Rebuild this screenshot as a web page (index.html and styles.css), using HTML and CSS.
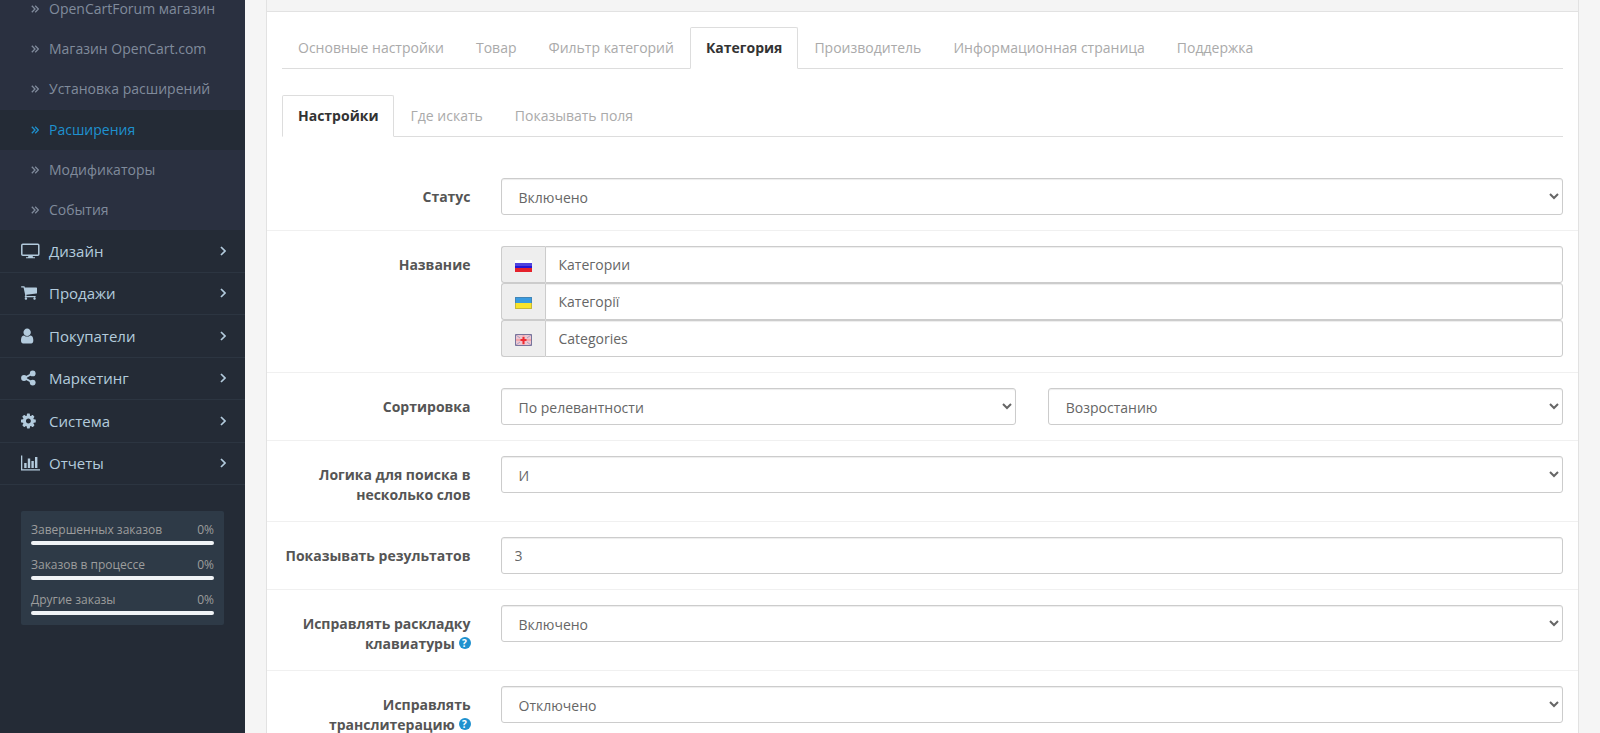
FILE: index.html
```html
<!DOCTYPE html>
<html lang="ru">
<head>
    <meta charset="UTF-8">
    <meta name="viewport" content="width=device-width, initial-scale=1.0">
    <title>Расширения</title>
    <link rel="stylesheet" href="styles.css">
</head>
<body>

    <!-- общие иконки -->
    <svg class="sprite" aria-hidden="true">
        <symbol id="i-double" viewBox="0 0 8 8"><path d="M.8.8 4 4 .8 7.2M4.2.8 7.4 4 4.2 7.2" fill="none" stroke="currentColor" stroke-width="1.3"/></symbol>
        <symbol id="i-angle" viewBox="0 0 6 10"><path d="M1 1l4 4-4 4" fill="none" stroke="currentColor" stroke-width="1.7"/></symbol>
    </svg>

    <!-- левая колонка -->
    <aside class="column-left">
        <ul class="submenu">
            <li><a href="#"><svg class="double"><use href="#i-double"/></svg>OpenCartForum магазин</a></li>
            <li><a href="#"><svg class="double"><use href="#i-double"/></svg>Магазин OpenCart.com</a></li>
            <li><a href="#"><svg class="double"><use href="#i-double"/></svg>Установка расширений</a></li>
            <li class="active"><a href="#"><svg class="double"><use href="#i-double"/></svg>Расширения</a></li>
            <li><a href="#"><svg class="double"><use href="#i-double"/></svg>Модификаторы</a></li>
            <li><a href="#"><svg class="double"><use href="#i-double"/></svg>События</a></li>
        </ul>
        <ul class="menu">
            <li><a href="#">
                <svg class="icon" viewBox="0 0 19 16"><rect x=".8" y="1.2" width="17" height="11" rx="1" fill="none" stroke="currentColor" stroke-width="1.5"/><path d="M7.5 12.5h4l.5 1.8h2v1H5v-1h2z"/></svg>
                Дизайн<svg class="angle"><use href="#i-angle"/></svg></a></li>
            <li><a href="#">
                <svg class="icon" viewBox="64 128 1976 1664"><path d="M704 1536q0 52-38 90t-90 38-90-38-38-90 38-90 90-38 90 38 38 90zm896 0q0 52-38 90t-90 38-90-38-38-90 38-90 90-38 90 38 38 90zm128-1088v512q0 24-16.500 42.500t-40.500 21.500l-1044 122q13 60 13 70 0 16-24 64h920q26 0 45 19t19 45-19 45-45 19h-1024q-26 0-45-19t-19-45q0-11 8-31.500t16-36 21.500-40 15.500-29.500l-177-823h-204q-26 0-45-19t-19-45 19-45 45-19h256q16 0 28.500 6.500t19.500 15.500 13 24.500 8 26 5.500 29.500 4.500 26h1201q26 0 45 19t19 45z"/></svg>
                Продажи<svg class="angle"><use href="#i-angle"/></svg></a></li>
            <li><a href="#">
                <svg class="icon" viewBox="256 64 1976 1664"><path d="M1536 1399q0 109-62.500 187t-150.500 78h-854q-88 0-150.500-78t-62.500-187q0-85 8.500-160.500t31.500-152 58.500-131 94-89 134.500-34.500q131 128 313 128t313-128q76 0 134.500 34.500t94 89 58.500 131 31.500 152 8.500 160.500zm-256-887q0 159-112.500 271.500t-271.500 112.500-271.500-112.500-112.500-271.500 112.500-271.500 271.500-112.500 271.500 112.500 112.500 271.500z"/></svg>
                Покупатели<svg class="angle"><use href="#i-angle"/></svg></a></li>
            <li><a href="#">
                <svg class="icon" viewBox="0 0 19 16"><path d="M11.500 3.500 3.500 8l8 4.500" fill="none" stroke="currentColor" stroke-width="2"/><circle cx="3" cy="8" r="2.900"/><circle cx="11.700" cy="3.400" r="2.900"/><circle cx="11.700" cy="12.600" r="2.900"/></svg>
                Маркетинг<svg class="angle"><use href="#i-angle"/></svg></a></li>
            <li><a href="#">
                <svg class="icon" viewBox="128 64 1976 1664"><path d="M1152 896q0-106-75-181t-181-75-181 75-75 181 75 181 181 75 181-75 75-181zm512-109v222q0 12-8 23t-20 13l-185 28q-19 54-39 91 35 50 107 138 10 12 10 25t-9 23q-27 37-99 108t-94 71q-12 0-26-9l-138-108q-44 23-91 38-16 136-29 186-7 28-36 28h-222q-14 0-24.500-8.500t-11.500-21.500l-28-184q-49-16-90-37l-141 107q-10 9-25 9-14 0-25-11-126-114-165-168-7-10-7-23 0-12 8-23 15-21 51-66.500t54-70.500q-27-50-41-99l-183-27q-13-2-21-12.500t-8-23.500v-222q0-12 8-23t19-13l186-28q14-46 39-92-40-57-107-138-10-12-10-24 0-10 9-23 26-36 98.500-107.500t94.500-71.500q13 0 26 10l138 107q44-23 91-38 16-136 29-186 7-28 36-28h222q14 0 24.500 8.500t11.500 21.500l28 184q49 16 90 37l142-107q9-9 24-9 13 0 25 10 129 119 165 170 7 8 7 22 0 12-8 23-15 21-51 66.500t-54 70.500q26 50 41 98l183 28q13 2 21 12.500t8 23.500z"/></svg>
                Система<svg class="angle"><use href="#i-angle"/></svg></a></li>
            <li><a href="#">
                <svg class="icon" viewBox="0 0 19 16"><path d="M0 .5h1.300v13.700H19v1.300H0zM3.200 8h2.400v5H3.200zM6.800 3.500h2.400V13H6.800zM10.400 6h2.400v7h-2.400zM14 2h2.400v11H14z"/></svg>
                Отчеты<svg class="angle"><use href="#i-angle"/></svg></a></li>
        </ul>
        <ul class="stats">
            <li><div>Завершенных заказов <span>0%</span></div><div class="progress"></div></li>
            <li><div>Заказов в процессе <span>0%</span></div><div class="progress"></div></li>
            <li><div>Другие заказы <span>0%</span></div><div class="progress"></div></li>
        </ul>
    </aside>

    <!-- содержимое -->
    <main class="content">
        <div class="panel">
            <div class="panel-heading"></div>
            <div class="panel-body">
                <ul class="nav-tabs">
                    <li><a href="#">Основные настройки</a></li>
                    <li><a href="#">Товар</a></li>
                    <li><a href="#">Фильтр категорий</a></li>
                    <li class="active"><a href="#">Категория</a></li>
                    <li><a href="#">Производитель</a></li>
                    <li><a href="#">Информационная страница</a></li>
                    <li><a href="#">Поддержка</a></li>
                </ul>
                <ul class="nav-tabs">
                    <li class="active"><a href="#">Настройки</a></li>
                    <li><a href="#">Где искать</a></li>
                    <li><a href="#">Показывать поля</a></li>
                </ul>

                <form>
                    <div class="form-group">
                        <label for="status">Статус</label>
                        <div class="field">
                            <select id="status" class="form-control"><option>Включено</option><option>Отключено</option></select>
                        </div>
                    </div>
                    <div class="form-group">
                        <label for="name-ru">Название</label>
                        <div class="field names">
                            <div class="input-group">
                                <span class="addon"><svg class="flag" viewBox="0 0 17 12"><path fill="#fff" d="M0 0h17v4H0z"/><path fill="#2316d8" d="M0 3h17v5H0z"/><path fill="#e5222c" d="M0 8h17v4H0z"/><path fill="#fff" opacity=".2" d="M0 0h17v6H0z"/></svg></span>
                                <input id="name-ru" class="form-control" type="text" value="Категории">
                            </div>
                            <div class="input-group">
                                <span class="addon"><svg class="flag" viewBox="0 0 17 12"><path fill="#3a9be0" d="M0 0h17v6H0z"/><path fill="#f8e42c" d="M0 6h17v6H0z"/><path fill="none" stroke="#555" stroke-opacity=".3" d="M.5.5h16v11H.5z"/></svg></span>
                                <input class="form-control" type="text" value="Категорії" aria-label="Название, українська">
                            </div>
                            <div class="input-group">
                                <span class="addon"><svg class="flag" viewBox="0 0 17 12"><path fill="#eec5cf" d="M0 0h17v12H0z"/><path stroke="#a5a0c4" d="M1 1l4 3M16 1l-4 3M1 11l4-3M16 11l-4-3"/><path stroke="#f3a6ab" stroke-width="2" d="M1 6h15M8.500 1v10"/><path fill="#ee2a32" d="M7.500 3h2v2h2v2h-2v3h-2V7h-2V5h2z"/><path fill="none" stroke="#77759c" d="M.5.5h16v11H.5z"/></svg></span>
                                <input class="form-control" type="text" value="Categories" aria-label="Название, English">
                            </div>
                        </div>
                    </div>
                    <div class="form-group">
                        <label for="sort">Сортировка</label>
                        <div class="field two">
                            <select id="sort" class="form-control"><option>По релевантности</option></select>
                            <select class="form-control" aria-label="Порядок сортировки"><option>Возростанию</option></select>
                        </div>
                    </div>
                    <div class="form-group">
                        <label for="logic">Логика для поиска в несколько слов</label>
                        <div class="field">
                            <select id="logic" class="form-control"><option>И</option></select>
                        </div>
                    </div>
                    <div class="form-group">
                        <label for="limit">Показывать результатов</label>
                        <div class="field">
                            <input id="limit" class="form-control" type="text" value="3">
                        </div>
                    </div>
                    <div class="form-group">
                        <label for="layout">Исправлять раскладку клавиатуры <span class="help">?</span></label>
                        <div class="field">
                            <select id="layout" class="form-control"><option>Включено</option><option>Отключено</option></select>
                        </div>
                    </div>
                    <div class="form-group">
                        <label for="translit">Исправлять транслитерацию <span class="help">?</span></label>
                        <div class="field">
                            <select id="translit" class="form-control"><option>Отключено</option><option>Включено</option></select>
                        </div>
                    </div>
                </form>
            </div>
        </div>
    </main>

</body>
</html>
```
FILE: styles.css
```css
* {
    box-sizing: border-box;
}

body {
    margin: 0;
    height: 100vh;
    overflow: hidden;
    display: flex;
    background: #f5f5f5;
    color: #666;
    font-family: "Open Sans", "Noto Sans", sans-serif;
    font-size: 14px;
    line-height: 20px;
}

ul {
    list-style: none;
    margin: 0;
    padding: 0;
}

a {
    color: inherit;
    text-decoration: none;
}

.sprite {
    display: none;
}

/* левая колонка */
.column-left {
    flex: 0 0 245px;
    background: #242b36;
}

.submenu {
    display: grid;
    grid-auto-rows: 1fr;
    height: 241px;
    margin-top: -11px;
    background: #2a3040;
    color: #808b9c;
}

.submenu a {
    display: flex;
    align-items: center;
    height: 100%;
    padding-left: 31px;
    gap: 10px;
}

.submenu .active {
    background: #242b36;
    color: #1e91cf;
}

.double {
    width: 8px;
    height: 8px;
}

.menu {
    display: grid;
    grid-auto-rows: 1fr;
    height: 255px;
    color: #b3cbdd;
    font-size: 15px;
}

.menu li {
    border-bottom: 1px solid #2c3541;
}

.menu a {
    display: flex;
    align-items: center;
    height: 100%;
    padding: 0 19px 0 21px;
}

.icon {
    width: 19px;
    height: 16px;
    margin-right: 9px;
    fill: currentColor;
}

.angle {
    width: 6px;
    height: 10px;
    margin-left: auto;
}

.stats {
    margin: 26px 21px 0;
    padding: 10px;
    border-radius: 2px;
    background: #2e3a47;
    color: #9d9d9d;
    font-size: 12px;
    line-height: 17px;
}

.stats li + li {
    margin-top: 11px;
}

.stats span {
    float: right;
}

.progress {
    height: 4px;
    margin-top: 3px;
    border-radius: 2px;
    background: #f0f3f6;
}

/* панель */
.content {
    flex: 1;
    min-width: 0;
    padding: 0 21px;
}

.panel {
    min-height: 100vh;
    border: 1px solid #e2e2e2;
    border-width: 0 1px;
    background: #fff;
}

.panel-heading {
    height: 12px;
    border-bottom: 1px solid #e2e2e2;
    background: #f4f4f4;
}

.panel-body {
    padding: 15px;
}

.nav-tabs {
    display: flex;
    margin-bottom: 26px;
    border-bottom: 1px solid #ddd;
    color: #aaa;
}

.nav-tabs a {
    display: block;
    margin-bottom: -1px;
    padding: 10px 15px;
    border: 1px solid transparent;
    border-radius: 2px 2px 0 0;
}

.nav-tabs .active a {
    border-color: #ddd;
    border-bottom-color: #fff;
    background: #fff;
    color: #333;
    font-weight: bold;
}

/* форма */
.form-group {
    display: flex;
    margin: 0 -15px;
    padding: 15px 0 16px;
    border-top: 1px solid #f0f0f0;
}

.form-group:first-child {
    border-top: 0;
}

.form-group label {
    width: 16.6667%;
    padding: 9px 15px 0;
    color: #555;
    font-weight: bold;
    text-align: right;
}

.field {
    flex: 1;
    min-width: 0;
    padding: 0 15px;
}

.form-control {
    display: block;
    width: 100%;
    height: 37px;
    margin: 0 0 -1px;
    padding: 8px 13px;
    border: 1px solid #ccc;
    border-radius: 3px;
    background-color: #fff;
    box-shadow: inset 0 1px 1px rgba(0, 0, 0, 0.075);
    color: #666;
    font: inherit;
}

.two {
    display: flex;
    gap: 32px;
}

.names {
    display: grid;
    gap: 1px;
}

.input-group {
    display: flex;
    height: 36px;
}

.input-group .form-control {
    flex: 1;
    border-radius: 0 3px 3px 0;
}

.addon {
    display: flex;
    align-items: center;
    justify-content: center;
    width: 44px;
    height: 37px;
    padding-top: 2px;
    border: 1px solid #ccc;
    border-right: 0;
    border-radius: 3px 0 0 3px;
    background: #eee;
}

.flag {
    width: 17px;
    height: 12px;
}

.help {
    display: inline-block;
    width: 12px;
    height: 12px;
    border-radius: 50%;
    background: #1e91cf;
    color: #fff;
    font-size: 10px;
    line-height: 12px;
    text-align: center;
    vertical-align: 2px;
}
```
